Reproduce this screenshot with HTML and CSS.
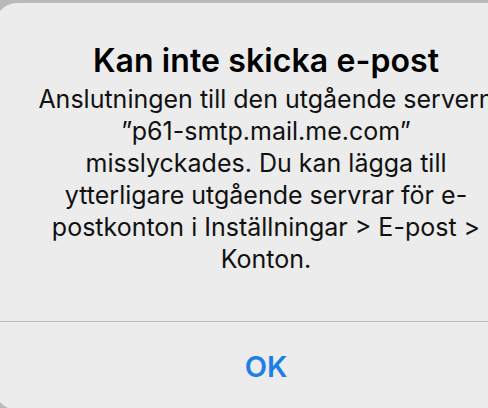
FILE: index.html
```html
<!DOCTYPE html>
<html lang="sv">
<head>
<meta charset="utf-8">
<link rel="stylesheet" href="styles.css">
</head>
<body>
<div class="alert">
  <div class="content">
    <h1 class="title">Kan inte skicka e-post</h1>
    <p class="message">Anslutningen till den utgående servern<br>”p61-smtp.mail.me.com”<br>misslyckades. Du kan lägga till<br>ytterligare utgående servrar för e-<br>postkonton i Inställningar &gt; E-post &gt;<br>Konton.</p>
  </div>
  <div class="actions">
    <button class="ok">OK</button>
  </div>
</div>
</body>
</html>
```
FILE: styles.css
```css
html, body {
  margin: 0;
  padding: 0;
  width: 488px;
  height: 408px;
  overflow: hidden;
  background: #b9b9b9;
}
body {
  font-family: Inter, "Liberation Sans", sans-serif;
  padding-top: 3px;
  box-sizing: border-box;
}
.alert {
  margin-left: -5px;
  width: 542px;
  height: 407px;
  border-radius: 22px;
  background: #ececec;
  display: flex;
  flex-direction: column;
}
.content {
  height: 319px;
  border-bottom: 1px solid #bdbdbd;
  text-align: center;
  padding-top: 39px;
  box-sizing: border-box;
}
.title {
  margin: 0;
  font-size: 32px;
  font-weight: 600;
  line-height: 38px;
  color: #000;
  letter-spacing: 0.1px;
}
.message {
  margin: 3px 0 0;
  font-size: 25px;
  font-weight: 400;
  line-height: 32px;
  color: #111;
  white-space: nowrap;
}
.actions {
  display: flex;
  justify-content: center;
  padding-top: 28px;
}
.ok {
  border: 0;
  background: none;
  padding: 0;
  font-family: inherit;
  font-size: 29px;
  font-weight: 600;
  color: #1d7fe6;
  line-height: 34px;
}
```
